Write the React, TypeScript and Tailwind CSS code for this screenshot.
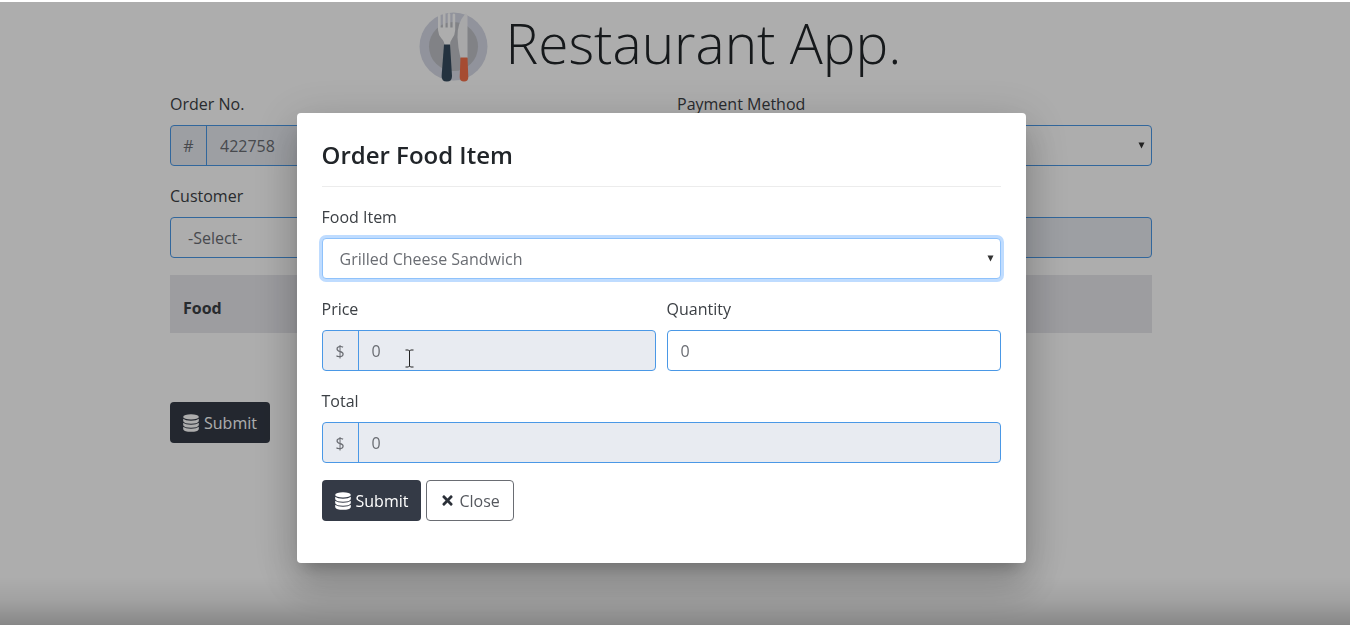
import type { ReactNode } from "react";
import { FaTimes } from "react-icons/fa";

const field =
  "h-[41px] w-full min-w-0 rounded border border-[#4a98e6] px-[13px] text-base text-[#6a6d73] outline-none";

function Field({ id, label, children }: { id: string; label: string; children: ReactNode }) {
  return (
    <div className="mb-[17px] min-w-0">
      <label htmlFor={id} className="mb-2 block leading-[26px]">
        {label}
      </label>
      {children}
    </div>
  );
}

function Select({ id, options, focused }: { id: string; options: string[]; focused?: boolean }) {
  return (
    <div className="relative">
      <select
        id={id}
        className={
          focused
            ? "h-[41px] w-full appearance-none rounded border border-[#8fc2fb] bg-white px-[17px] text-base text-[#6a6d73] ring-3 ring-[#bfdcff] outline-none"
            : "h-[41px] w-full appearance-none rounded border border-[#4a98e6] bg-white px-[17px] text-base text-[#6a6d73] outline-none"
        }
      >
        {options.map((o) => (
          <option key={o}>{o}</option>
        ))}
      </select>
      <svg
        viewBox="0 0 7 7"
        className="pointer-events-none absolute top-[17px] right-[7px] h-[7px] w-[7px] fill-[#333]"
        aria-hidden="true"
      >
        <path d="M.5 .5h6L3.500 6.500z" />
      </svg>
    </div>
  );
}

function AddonInput({ id, sign, value }: { id: string; sign: string; value: string }) {
  return (
    <div className="flex h-[41px] overflow-hidden rounded border border-[#4a98e6] bg-[#e8ebf1] text-[#6a6d73]">
      <span className="flex w-9 shrink-0 items-center justify-center border-r border-[#4a98e6]">
        {sign}
      </span>
      <input
        id={id}
        readOnly
        value={value}
        className="w-full min-w-0 bg-transparent px-[13px] text-base outline-none"
      />
    </div>
  );
}

function DatabaseIcon() {
  return (
    <svg viewBox="0 0 16 18" className="h-[18px] w-4 fill-white" aria-hidden="true">
      <ellipse cx="8" cy="2.900" rx="7.800" ry="2.700" />
      <path d="M.2 4.800Q2.500 6.700 8 6.700T15.800 4.800V7.200Q14.800 9.700 8 9.700T.2 7.200z" />
      <path d="M.2 8.800Q2.500 10.700 8 10.700T15.800 8.800V11.200Q14.800 13.700 8 13.700T.2 11.200z" />
      <path d="M.2 12.800Q2.500 14.700 8 14.700T15.800 12.800V15.200Q14.800 17.800 8 17.800T.2 15.200z" />
    </svg>
  );
}

function SubmitButton() {
  return (
    <button
      type="button"
      className="flex h-[41px] items-center gap-[5px] rounded bg-[#343a46] px-[13px] text-base text-white"
    >
      <DatabaseIcon />
      Submit
    </button>
  );
}

function Logo() {
  return (
    <svg viewBox="0 0 69 70" className="h-[70px] w-[69px]" aria-hidden="true">
      <circle cx="34.5" cy="34.5" r="34" fill="#d6d9e6" />
      <circle cx="34.5" cy="34.5" r="24.5" fill="#bec0c6" />
      <path
        d="M19 2.500q1.300-2 2.600 0V15.500h2.300V2q1.300-2 2.600 0v13.500h2.200V2q1.300-2 2.600 0v13.500h2.300V2.500q1.300-2 2.600 0V18q-.2 5-3 8.500Q31 29 31 34H25.500Q25.500 29 22.500 26.500 19.300 23 19 18z"
        fill="#ffffff"
      />
      <path d="M25 32.500h6l2 31.500q.2 5.500-5.200 5.500T22.600 64z" fill="#354b5e" />
      <path d="M46.500 1.500Q38 11 38.500 25q.5 11 3 21H48.500V4q-.3-3-2-2.500z" fill="#f8f8fa" />
      <path d="M41.500 45.500h7L49.300 65q0 4.500-4.300 4.500T40.700 65z" fill="#f5714b" />
    </svg>
  );
}

function OrderPage() {
  return (
    <main className="mx-auto max-w-[982px]">
      <header className="flex h-[91px] items-center justify-center gap-[18px] pr-0.5">
        <div className="pt-0.5">
          <Logo />
        </div>
        <h1 className="pb-1.5 text-[55px] leading-[80px] font-light text-[#212529]">
          Restaurant App.
        </h1>
      </header>
      <form>
        <div className="grid grid-cols-2 gap-x-8">
          <Field id="order-no" label="Order No.">
            <AddonInput id="order-no" sign="#" value="422758" />
          </Field>
          <Field id="payment" label="Payment Method">
            <Select id="payment" options={["-Select-"]} />
          </Field>
          <Field id="customer" label="Customer">
            <Select id="customer" options={["-Select-"]} />
          </Field>
          <Field id="grand-total" label="Grand Total">
            <AddonInput id="grand-total" sign="$" value="0" />
          </Field>
        </div>
        <table className="mb-[69px] w-full bg-[#e7e7ec]">
          <thead>
            <tr className="h-[58px]">
              <th className="px-[13px] pt-2 text-left font-bold">Food</th>
            </tr>
          </thead>
        </table>
        <SubmitButton />
      </form>
    </main>
  );
}

function OrderItemDialog() {
  return (
    <section
      role="dialog"
      aria-modal="true"
      aria-labelledby="dialog-title"
      className="w-full max-w-[729px] rounded bg-white p-[25px] pb-[42px] shadow-[0_11px_15px_-7px_rgba(0,0,0,0.2),0_24px_38px_3px_rgba(0,0,0,0.14),0_9px_46px_8px_rgba(0,0,0,0.12)]"
    >
      <h2
        id="dialog-title"
        className="mb-[17px] border-b border-[#ececec] pb-[14px] text-2xl leading-[34px] font-semibold text-[#212529]"
      >
        Order Food Item
      </h2>
      <form>
        <Field id="food-item" label="Food Item">
          <Select id="food-item" options={["Grilled Cheese Sandwich"]} focused />
        </Field>
        <div className="grid grid-cols-2 gap-x-[11px]">
          <Field id="price" label="Price">
            <div className="relative">
              <AddonInput id="price" sign="$" value="0" />
              <svg
                viewBox="0 0 9 19"
                className="pointer-events-none absolute top-[19px] left-[83px] h-[19px] w-[9px]"
                fill="none"
                stroke="#222"
                aria-hidden="true"
              >
                <path d="M.5 1H3.500L4.500 2L5.500 1H8.500M4.500 2V17M.5 18H3.500L4.500 17L5.500 18H8.500" />
              </svg>
            </div>
          </Field>
          <Field id="quantity" label="Quantity">
            <input id="quantity" defaultValue="0" className={field} />
          </Field>
        </div>
        <Field id="total" label="Total">
          <AddonInput id="total" sign="$" value="0" />
        </Field>
        <div className="flex gap-[5px]">
          <SubmitButton />
          <button
            type="button"
            className="flex h-[41px] items-center gap-1 rounded border border-[#6a6d73] bg-white px-[13px] text-base text-[#55585e]"
          >
            <FaTimes className="h-[15px] w-[15px] text-[#2b3038]" />
            Close
          </button>
        </div>
      </form>
    </section>
  );
}

export default function App() {
  return (
    <div className="min-h-screen bg-white pr-7 font-['Open_Sans','Noto_Sans',sans-serif] text-base text-[#3c4045]">
      <OrderPage />
      <div className="fixed inset-x-0 top-0.5 bottom-0 bg-black/32">
        <div className="absolute inset-x-0 bottom-0 h-12 bg-linear-to-t from-black/22 via-black/7 to-transparent" />
        <div className="relative flex justify-center pt-[111px] pr-7">
          <OrderItemDialog />
        </div>
      </div>
    </div>
  );
}
